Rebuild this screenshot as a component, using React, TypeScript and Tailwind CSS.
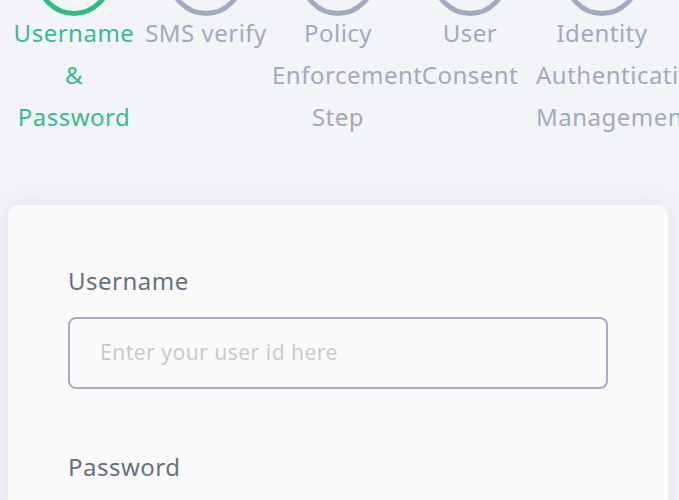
import React from "react";

const steps = [
  { label: "Username & Password", active: true },
  { label: "SMS verify", active: false },
  { label: "Policy Enforcement Step", active: false },
  { label: "User Consent", active: false },
  { label: "Identity Authentication Management", active: false },
];

export default function App() {
  return (
    <div
      className="min-h-[500px] w-full overflow-hidden bg-[#f3f4f8] tracking-[0.5px]"
      style={{ fontFamily: '"Noto Sans", sans-serif' }}
    >
      <div className="ml-2 w-[660px]">
        <div className="mt-[-60px] grid grid-cols-5">
          {steps.map((s) => (
            <div key={s.label} className="flex flex-col items-center">
              <div
                className={
                  s.active
                    ? "mb-[-4px] h-[76px] w-[76px] rounded-full border-[5px] border-[#2ebd85]"
                    : "mb-[-4px] h-[76px] w-[76px] rounded-full border-[5px] border-[#a2aac0]"
                }
              />
              <div
                className={
                  s.active
                    ? "w-full text-center text-[24px] leading-[42px] text-[#3cba8b]"
                    : "w-full text-center text-[24px] leading-[42px] text-[#a2aabd]"
                }
              >
                {s.label}
              </div>
            </div>
          ))}
        </div>
        <div className="mt-[67px] rounded-[10px] bg-[#fafafa] px-[60px] pt-[60px] pb-10 shadow-[0_0_28px_rgba(150,160,180,0.2)]">
          <div className="text-[24px] leading-[32px] text-[#697080]">Username</div>
          <div className="mt-[20px] flex h-[72px] items-center rounded-[8px] border-2 border-[#a5adc0] px-[30px]">
            <span className="text-[21px] text-[#c6cad2]">Enter your user id here</span>
          </div>
          <div className="mt-[62px] text-[24px] leading-[32px] text-[#697080]">Password</div>
        </div>
      </div>
    </div>
  );
}
